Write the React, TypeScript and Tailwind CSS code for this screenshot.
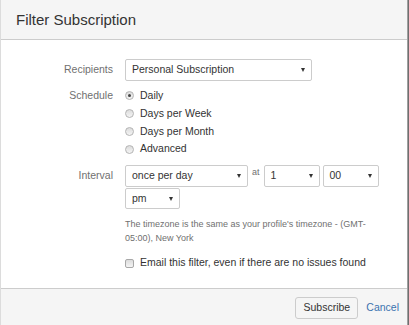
import React from "react";

function Arrow() {
  return (
    <span className="absolute right-[6px] top-1/2 -translate-y-1/2 w-0 h-0 border-l-[2.5px] border-r-[2.5px] border-t-[4px] border-l-transparent border-r-transparent border-t-[#333]" />
  );
}

function Select({ value, w, h = "h-[22px]" }: { value: string; w: string; h?: string }) {
  return (
    <div className={`relative ${w} ${h} shrink-0 border border-[#ccc] rounded-[2px] bg-white pl-[6px] flex items-center text-[10.5px] text-[#333]`}>
      <span>{value}</span>
      <Arrow />
    </div>
  );
}

function Radio({ label, checked }: { label: string; checked?: boolean }) {
  return (
    <div className="h-[17.75px] flex items-center">
      <span className="relative w-[9px] h-[9px] rounded-full border border-[#b4b4b4] bg-gradient-to-b from-[#dcdcdc] to-[#f4f4f4] flex items-center justify-center">
        {checked && <span className="w-[3px] h-[3px] rounded-full bg-[#444]" />}
      </span>
      <span className="ml-[6px] text-[10.5px] text-[#333]">{label}</span>
    </div>
  );
}

export default function App() {
  return (
    <div className="flex w-[409px] h-[325px] bg-[#6f6f6f] overflow-hidden" style={{ fontFamily: '"Liberation Sans", Arial, sans-serif' }}>
      <div className="w-[408px] h-[325px] flex flex-col bg-white border-l border-l-[#dcdcdc] border-r border-r-[#a0a0a0]">
        <div className="h-[40px] shrink-0 bg-[#f5f5f5] border-b border-b-[#cccccc] flex items-center pl-[15px] pt-[2px]">
          <span className="text-[15px] text-[#333]">Filter Subscription</span>
        </div>
        <div className="flex-1 pt-[19px]">
          <div className="flex items-center h-[22px]">
            <div className="w-[112px] text-right text-[10.5px] text-[#707070]">Recipients</div>
            <div className="ml-[12px]">
              <Select value="Personal Subscription" w="w-[187px]" />
            </div>
          </div>
          <div className="flex mt-[6px]">
            <div className="w-[112px] h-[17.75px] flex items-center justify-end text-[10.5px] text-[#707070]">Schedule</div>
            <div className="ml-[12px] flex flex-col">
              <Radio label="Daily" checked />
              <Radio label="Days per Week" />
              <Radio label="Days per Month" />
              <Radio label="Advanced" />
            </div>
          </div>
          <div className="flex mt-[7px]">
            <div className="w-[112px] h-[22px] flex items-center justify-end text-[10.5px] text-[#707070]">Interval</div>
            <div className="ml-[12px] flex flex-wrap gap-x-[3px] gap-y-[1px] w-[270px]">
              <Select value="once per day" w="w-[123px]" />
              <span className="self-start text-[9px] leading-[14px] text-[#707070] px-[1px]">at</span>
              <Select value="1" w="w-[56px]" />
              <Select value="00" w="w-[56px]" />
              <Select value="pm" w="w-[55px]" h="h-[21px]" />
            </div>
          </div>
          <div className="ml-[124px] mt-[8px] w-[255px] text-[9px] leading-[14px] text-[#707070]">
            The timezone is the same as your profile's timezone - (GMT-05:00), New York
          </div>
          <div className="ml-[124px] mt-[9px] h-[18px] flex items-center">
            <span className="w-[9px] h-[9px] rounded-[2px] border border-[#a8a8a8] bg-gradient-to-b from-[#dcdcdc] to-[#f4f4f4]" />
            <span className="ml-[6px] text-[10.5px] text-[#333]">Email this filter, even if there are no issues found</span>
          </div>
        </div>
        <div className="h-[37px] shrink-0 bg-[#f5f5f5] border-t border-t-[#cccccc] flex justify-end items-start pt-[8px] pr-[8px]">
          <div className="w-[63px] h-[22px] border border-[#ccc] rounded-[3px] bg-[#f5f5f5] flex items-center justify-center text-[10.5px] text-[#333]">Subscribe</div>
          <div className="ml-[8px] h-[22px] flex items-center text-[10.5px] text-[#3b73af]">Cancel</div>
        </div>
      </div>
    </div>
  );
}
